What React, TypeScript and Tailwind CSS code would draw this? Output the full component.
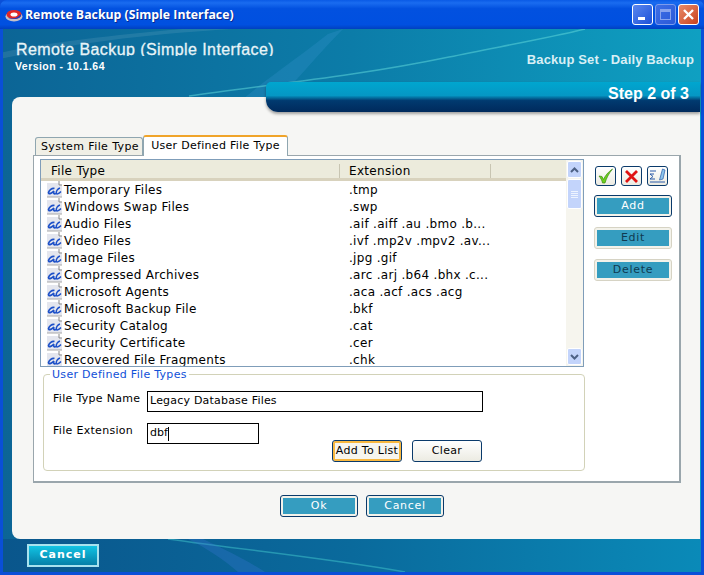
const files: [string, string][] = [
  ["Temporary Files", ".tmp"],
  ["Windows Swap Files", ".swp"],
  ["Audio Files", ".aif .aiff .au .bmo .b..."],
  ["Video Files", ".ivf .mp2v .mpv2 .av..."],
  ["Image Files", ".jpg .gif"],
  ["Compressed Archives", ".arc .arj .b64 .bhx .c..."],
  ["Microsoft Agents", ".aca .acf .acs .acg"],
  ["Microsoft Backup File", ".bkf"],
  ["Security Catalog", ".cat"],
  ["Security Certificate", ".cer"],
  ["Recovered File Fragments", ".chk"],
];

function FileIcon() {
  return (
    <svg width="17" height="17" viewBox="0 0 17 17" className="shrink-0">
      <path d="M1 2H12.500L16 4.500V16H1z" fill="#e4e6ee" />
      <path d="M1 16H16" stroke="#a8a8a8" />
      <path d="M13 0v4h3" fill="none" stroke="#8a8a8a" />
      <path d="M8.500 7.500C6 6.500 3 9.500 2.500 11.500 2.500 13.500 5 13 8 10 7 12 8 13.500 10 12.500" fill="none" stroke="#1c50c8" strokeWidth="1.700" />
      <path d="M14 7C12 7.500 9.500 10.500 10.500 12.500 11 13.500 13 12.500 15 10.500" fill="none" stroke="#1c50c8" strokeWidth="1.500" />
    </svg>
  );
}

function TealButton({ label, w, faded, dark }: { label: string; w: string; faded?: boolean; dark?: boolean }) {
  return (
    <div className={`${w} h-[22px] p-[2px] rounded-[3px] border bg-[#f3f2ea] ${faded ? "border-[#d6d3c4]" : "border-[#0a3a6b]"}`}>
      <div className={`h-full bg-[#359dc0] flex items-center justify-center text-[11px] tracking-[0.7px] ${dark ? "text-[#0f3a50]" : "text-white"}`}>{label}</div>
    </div>
  );
}

function Scrollbar() {
  return (
    <div className="w-[17px] shrink-0 bg-[#f6f5ee] flex flex-col">
      <div className="h-[17px] m-[1px] mb-0 rounded-[2px] border border-white bg-[#c3d4fb] flex items-center justify-center">
        <svg width="9" height="6" viewBox="0 0 9 6"><path d="M1 5l3.500-3.500L8 5" fill="none" stroke="#4d6185" strokeWidth="2" /></svg>
      </div>
      <div className="h-[30px] mx-[1px] mt-[1px] rounded-[2px] border border-white bg-[#c3d4fb] flex flex-col items-center justify-center gap-[1px]">
        <div className="w-[7px] h-px bg-[#eef4ff]" />
        <div className="w-[7px] h-px bg-[#eef4ff]" />
        <div className="w-[7px] h-px bg-[#eef4ff]" />
        <div className="w-[7px] h-px bg-[#eef4ff]" />
      </div>
      <div className="flex-1" />
      <div className="h-[17px] m-[1px] mt-0 rounded-[2px] border border-white bg-[#c3d4fb] flex items-center justify-center">
        <svg width="9" height="6" viewBox="0 0 9 6"><path d="M1 1l3.500 3.500L8 1" fill="none" stroke="#4d6185" strokeWidth="2" /></svg>
      </div>
    </div>
  );
}

function SmallIcon({ children }: { children: React.ReactNode }) {
  return (
    <div className="w-[21px] h-[20px] rounded-[3px] border border-[#0a3a6b] bg-gradient-to-b from-white to-[#ecebe2] flex items-center justify-center">
      {children}
    </div>
  );
}

export default function App() {
  return (
    <div className="w-[704px] h-[575px] overflow-hidden flex flex-col bg-[#0a4fd8] font-['DejaVu_Sans',sans-serif] text-black">
      <div className="h-[29px] shrink-0 rounded-t-[7px] bg-[linear-gradient(to_bottom,#0a5ae6_0%,#1a6cf0_10%,#0251e0_30%,#0050e0_85%,#0040c0_100%)] flex items-center pl-[5px] pr-[5px]">
        <svg width="18" height="14" viewBox="0 0 18 14" className="shrink-0">
          <ellipse cx="9" cy="8.500" rx="8.500" ry="5" fill="#c4c0c8" />
          <ellipse cx="9" cy="6.500" rx="7.500" ry="4.500" fill="#e02828" />
          <path d="M3 9.500c3 2 9 1.500 13-3.500 1 3-3 5-7 5-3 0-5-.5-6-1.500z" fill="#1d3fc0" />
          <ellipse cx="9" cy="6.500" rx="3.500" ry="2" fill="#fff" />
        </svg>
        <div className="ml-[2px] mt-[2px] text-white font-bold text-[12.300px] font-['Open_Sans',sans-serif] [text-shadow:1px_1px_0_#0a2a90] whitespace-nowrap">Remote Backup (Simple Interface)</div>
        <div className="ml-auto flex gap-[2px]">
          <div className="w-[21px] h-[21px] rounded-[3px] border border-white bg-gradient-to-br from-[#5a86ee] to-[#1c50d8] flex items-end pl-[5px] pb-[4px]">
            <div className="w-[7px] h-[3px] bg-white" />
          </div>
          <div className="w-[21px] h-[21px] rounded-[3px] border border-[#7d9cec] bg-gradient-to-br from-[#3d6ee6] to-[#2a5ad8] flex items-center justify-center">
            <div className="w-[11px] h-[11px] border border-[#87a3ee] border-t-[3px]" />
          </div>
          <div className="w-[21px] h-[21px] rounded-[3px] border border-white bg-gradient-to-br from-[#e88a68] to-[#c8401a] flex items-center justify-center">
            <svg width="13" height="13" viewBox="0 0 13 13"><path d="M2 2l9 9M11 2l-9 9" stroke="#fff" strokeWidth="2.400" /></svg>
          </div>
        </div>
      </div>

      <div className="flex-1 min-h-0 relative mx-[3px] mb-[3px] flex flex-col bg-gradient-to-r from-[#0c6596] via-[#0c7ca8] to-[#0fa0c2]">
        <svg className="absolute left-0 top-0 pointer-events-none" width="698" height="70" viewBox="0 0 698 70">
          <path d="M-3 30C80 12 160 4 230 0L180 0C110 6 40 14-3 24z" fill="#ffffff" fillOpacity="0.09" />
          <path d="M325 5C300 25 270 45 240 70L275 70C300 45 315 25 340 0z" fill="#4aa0e0" fillOpacity="0.2" />
          <path d="M186 67C260 56 350 48 446 28 500 17 550 8 582 0" fill="none" stroke="#5cd6d8" strokeOpacity="0.55" strokeWidth="1.500" />
        </svg>
        <div className="h-[68px] shrink-0 relative flex justify-between pl-[13px] pr-[7px] text-white">
          <div className="pt-[11px]">
            <div className="h-[16px] overflow-hidden leading-[19px] text-[16px] font-['Liberation_Sans',sans-serif] tracking-[0.42px] text-[#e8f4f8] [-webkit-text-stroke:0.3px_#e8f4f8] whitespace-nowrap">Remote Backup (Simple Interface)</div>
            <div className="-ml-[1px] mt-[4px] text-[10.500px] leading-[13px] font-bold font-['Liberation_Sans',sans-serif] tracking-[0.45px]">Version - 10.1.64</div>
          </div>
          <div className="pt-[23px] text-[13px] leading-[16px] font-bold font-['Liberation_Sans',sans-serif] tracking-[0.13px] text-[#d8eff5]">Backup Set - Daily Backup</div>
        </div>

        <div className="flex-1 min-h-0 relative ml-[9px] mr-[1px] rounded-l-[8px] bg-[#f6f6f4] flex flex-col">
          <div className="-mt-[15px] ml-auto w-[434px] h-[30px] shrink-0 rounded-bl-[12px] rounded-tl-[5px] bg-[linear-gradient(to_bottom,#00a6cf_0%,#0597c4_45%,#013a70_62%,#002a5c_100%)] shadow-[0_2px_3px_rgba(0,0,0,0.35)] flex items-center justify-end pr-[11px] pb-[6px] text-white font-bold text-[16px] font-['Liberation_Sans',sans-serif]">
            Step 2 of 3
          </div>

          <div className="mt-[22px] ml-[21px] flex items-end h-[21px] shrink-0">
            <div className="ml-[2px] w-[108px] h-[19px] rounded-t-[3px] border border-b-0 border-[#8fa6b0] bg-[#f0efe6] flex items-center justify-center pl-[2px] text-[11px] tracking-[0.4px] -mb-px">System File Type</div>
            <div className="relative z-10 w-[145px] h-[21px] rounded-t-[3px] border border-t-[2px] border-b-0 border-[#8fa6b0] border-t-[#f0a42a] bg-white flex items-center justify-center text-[11px] tracking-[0.3px] -mb-px">User Defined File Type</div>
          </div>

          <div className="ml-[21px] w-[648px] h-[328px] shrink-0 border border-[#9aa6ac] border-r-[2px] border-b-[2px] bg-white flex pl-[6px] pt-[3px]">
            <div className="w-[544px] flex flex-col">
              <div className="h-[208px] border border-[#7f9db9] flex shrink-0">
                <div className="flex-1 min-w-0 flex flex-col">
                  <div className="h-[21px] shrink-0 bg-[#ecebdc] border-b-[3px] border-[#d8d2bd] flex items-center pt-[4px] text-[12px] tracking-[0.3px]">
                    <div className="w-[299px] pl-[10px] border-r border-[#c8c5b2] h-[14px] flex items-center">File Type</div>
                    <div className="w-[151px] pl-[9px] border-r border-[#c8c5b2] h-[14px] flex items-center">Extension</div>
                  </div>
                  <div className="flex-1 overflow-hidden">
                    {files.map(([name, ext]) => (
                      <div key={name} className="h-[17px] flex items-center text-[12px] tracking-[0.3px] whitespace-nowrap">
                        <div className="w-[299px] flex items-center pl-[5px] gap-[1px]"><FileIcon /><span>{name}</span></div>
                        <div className="pl-[9px]">{ext}</div>
                      </div>
                    ))}
                  </div>
                </div>
                <Scrollbar />
              </div>

              <div className="relative mt-[7px] ml-[3px] w-[542px] h-[97px] shrink-0 rounded-[4px] border border-[#d2d2b8] pl-[9px]">
                <div className="absolute -top-[7px] left-[6px] px-[2px] bg-white text-[#1050d8] text-[11px] leading-[13px] tracking-[0.3px]">User Defined File Types</div>
                <div className="flex items-center pt-[16px]">
                  <div className="w-[94px] text-[11px] tracking-[0.3px] -mt-[5px]">File Type Name</div>
                  <div className="w-[336px] h-[21px] border border-black flex items-center pl-[2px] text-[11px] tracking-[0.2px]">Legacy Database Files</div>
                </div>
                <div className="flex items-center pt-[11px]">
                  <div className="w-[94px] text-[11px] tracking-[0.3px] -mt-[4px]">File Extension</div>
                  <div className="w-[112px] h-[21px] border border-black flex items-center pl-[2px] text-[11px]">dbf<span className="w-px h-[14px] bg-black" /></div>
                </div>
                <div className="flex -mt-[4px] ml-[279px] gap-[10px]">
                  <div className="w-[70px] h-[22px] rounded-[3px] border border-[#0a3a6b] shadow-[inset_0_0_0_2px_#f8b840] bg-[#f6f5ee] flex items-center justify-center text-[11px] tracking-[0.3px]">Add To List</div>
                  <div className="w-[70px] h-[22px] rounded-[3px] border border-[#0a3a6b] bg-gradient-to-b from-white to-[#ecebe2] flex items-center justify-center text-[11px] tracking-[0.3px]">Clear</div>
                </div>
              </div>
            </div>

            <div className="ml-[10px] flex flex-col items-start">
              <div className="flex gap-[5px] mt-[7px] ml-[1px]">
                <SmallIcon>
                  <svg width="17" height="16" viewBox="0 0 17 16"><path d="M2 8l3 .5 1.500 3C8 8 11 4 15.500 1 11.500 6 9.500 10 8 15H5.500C5 12 3.500 10 2 8z" fill="#6cd21e" stroke="#3e8a12" strokeWidth=".7" /></svg>
                </SmallIcon>
                <SmallIcon>
                  <svg width="15" height="15" viewBox="0 0 15 15"><path d="M2 2l11 11M13 2L2 13" stroke="#e01212" strokeWidth="2.800" /></svg>
                </SmallIcon>
                <SmallIcon>
                  <svg width="17" height="16" viewBox="0 0 17 16" fill="none"><path d="M1 3h6M5 6H1l3 2.500L1 11h5M1 14h15" stroke="#2a5aa8" /><path d="M13.500 1L16 2l-2 9-3.500 1z" fill="#8cc4ec" stroke="#2a5aa8" strokeWidth=".7" /></svg>
                </SmallIcon>
              </div>
              <div className="mt-[9px]"><TealButton label="Add" w="w-[78px]" /></div>
              <div className="mt-[10px]"><TealButton label="Edit" w="w-[78px]" faded dark /></div>
              <div className="mt-[10px]"><TealButton label="Delete" w="w-[78px]" faded dark /></div>
            </div>
          </div>

          <div className="mt-[12px] ml-[268px] flex gap-[8px]">
            <TealButton label="Ok" w="w-[78px]" />
            <TealButton label="Cancel" w="w-[78px]" />
          </div>
        </div>

        <div className="h-[33px] shrink-0 flex items-center pl-[24px] relative overflow-hidden bg-gradient-to-r from-[#0a568c] via-[#0a6a9c] to-[#0a8ab8]">
          <svg className="absolute left-0 top-0 pointer-events-none" width="698" height="33" viewBox="0 0 698 33">
            <path d="M165 0C250 12 330 20 402 33" fill="none" stroke="#3ec0c8" strokeOpacity="0.55" strokeWidth="1.500" />
            <path d="M200 0C225 12 245 22 262 33L235 33C220 20 205 10 185 0z" fill="#3a78d8" fillOpacity="0.3" />
          </svg>
          <div className="relative w-[72px] h-[23px] border-2 border-[#a8e2ee] bg-gradient-to-b from-[#12c4e4] to-[#0780a8] flex items-center justify-center text-white font-bold text-[11px] tracking-[1px]">Cancel</div>
        </div>
      </div>
    </div>
  );
}
